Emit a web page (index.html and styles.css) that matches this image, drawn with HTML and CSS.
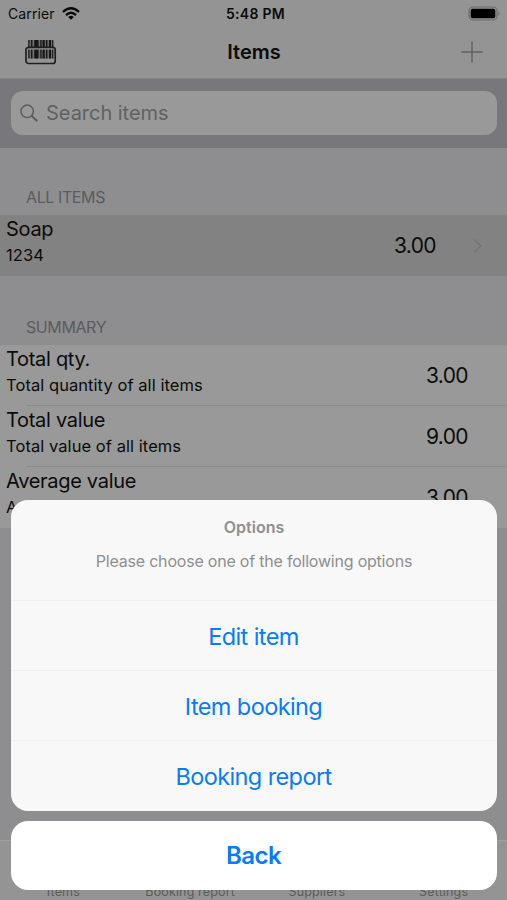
FILE: index.html
```html
<!DOCTYPE html>
<html lang="en">
<head>
<meta charset="utf-8">
<title>Items</title>
<link rel="stylesheet" href="styles.css">
</head>
<body>
<div class="screen">
  <header class="top">
    <div class="status">
      <div class="carrier"><span>Carrier</span>
        <svg class="wifi" width="18" height="13" viewBox="0 0 18 13"><g fill="none" stroke="#080808" stroke-width="2.3"><path d="M1 5Q9-2.5 17 5"/><path d="M4 8.1Q9 3.3 14 8.1"/></g><path d="M6.2 10Q9 7.6 11.8 10L9 12.8Z" fill="#080808"/></svg>
      </div>
      <div class="time">5:48 PM</div>
      <svg class="battery" width="33" height="15" viewBox="0 0 33 15"><rect x="1" y="1" width="28" height="13" rx="4" fill="none" stroke="#6c6c6c" stroke-width="1.2"/><rect x="2.7" y="2.7" width="24.6" height="9.6" rx="2" fill="#000"/><path d="M30.5 5Q32.7 7.5 30.5 10Z" fill="#6c6c6c"/></svg>
    </div>
    <div class="nav">
      <svg class="scan" width="32" height="27" viewBox="0 0 32 27"><path fill="#6c6c6c" d="M3 1h25.5v18.5H3z"/><path fill="#161616" d="M3.3 1h1.2v18.5H3.3zM6 1h1.4v18.5H6zM9.3 1h4.2v18.5H9.3zM15.3 1h1.3v18.5h-1.3zM17.6 1h2.2v18.5h-2.2zM21 1h1.4v18.5H21zM24 1h2v18.5h-2zM27.2 1h1.1v18.5h-1.1z"/><path fill="#929292" d="M2 10.6h28V9H2z"/><rect x="1" y="8.3" width="29.2" height="16.2" rx="2.5" fill="none" stroke="#202020" stroke-width="1.7"/></svg>
      <h1>Items</h1>
      <svg class="plus" width="22" height="22" viewBox="0 0 22 22"><path d="M11 .5v21M.5 11h21" stroke="#606060" stroke-width="1.5"/></svg>
    </div>
  </header>
  <div class="searchbar">
    <div class="field">
      <svg width="19" height="19" viewBox="0 0 19 19"><g fill="none" stroke="#5d5d60" stroke-width="1.5"><circle cx="7.2" cy="7.3" r="6.2"/><path d="M11.6 11.8l5.7 5.5" stroke-width="2"/></g></svg>
      <span>Search items</span>
    </div>
  </div>
  <main>
    <h2 class="first">ALL ITEMS</h2>
    <div class="row selected">
      <div class="labels"><div class="name">Soap</div><div class="sub">1234</div></div>
      <div class="value">3.00</div>
      <svg class="chev" width="10" height="16" viewBox="0 0 10 16"><path d="M1 1.5L8 8L1 14.5" fill="none" stroke="#747476" stroke-width="1.4"/></svg>
    </div>
    <h2 class="second">SUMMARY</h2>
    <div class="row"><div class="labels"><div class="name">Total qty.</div><div class="sub">Total quantity of all items</div></div><div class="value">3.00</div></div>
    <div class="row ruled"><div class="labels"><div class="name">Total value</div><div class="sub">Total value of all items</div></div><div class="value">9.00</div></div>
    <div class="row ruled"><div class="labels"><div class="name">Average value</div><div class="sub">Average value of all items</div></div><div class="value">3.00</div></div>
  </main>
  <footer class="tabs"><span>Items</span><span>Booking report</span><span>Suppliers</span><span>Settings</span></footer>
</div>
<div class="overlay">
  <section class="sheet">
    <div class="intro"><div class="title">Options</div><div class="message">Please choose one of the following options</div></div>
    <div class="action">Edit item</div>
    <div class="action">Item booking</div>
    <div class="action">Booking report</div>
  </section>
  <div class="back">Back</div>
</div>
</body>
</html>
```
FILE: styles.css
```css
* { box-sizing: border-box; }
body { margin: 0; font-family: Inter, "Liberation Sans", sans-serif; color: #0b0b0b; }
h1, h2 { margin: 0; }
.screen { height: 900px; overflow: hidden; display: flex; flex-direction: column; background: #8e8e91; }
.top { height: 79px; flex: none; background: #949494; border-bottom: 1px solid #858587; }
.status { height: 28px; padding: 0 6px 0 8px; display: grid; grid-template-columns: 1fr auto 1fr; align-items: center; font-size: 14px; line-height: 28px; }
.carrier { display: flex; align-items: center; gap: 7px; letter-spacing: .1px; }
.wifi { margin-top: -2px; }
.time { font-weight: 600; letter-spacing: .3px; padding-left: 2px; }
.battery { justify-self: end; margin-top: -1px; }
.nav { height: 50px; padding: 0 24px 0 25px; display: grid; grid-template-columns: 1fr auto 1fr; align-items: center; }
.nav h1 { font-size: 20px; line-height: 48px; font-weight: 600; margin-top: -2px; }
.scan { margin-top: -2px; }
.plus { justify-self: end; margin-top: -2px; }
.searchbar { height: 69px; flex: none; padding: 12px 10px 13px 11px; background: #78787c; }
.field { height: 44px; border-radius: 12px; background: #999; display: flex; align-items: center; gap: 7px; padding-left: 9px; color: #616164; font-size: 20px; letter-spacing: -.03px; }
main { flex: 1; }
h2 { font-weight: 400; font-size: 16px; line-height: 20px; letter-spacing: -.4px; color: #5b5b5e; padding-left: 26px; }
.first { height: 67px; padding-top: 39px; }
.second { height: 69px; padding-top: 41px; }
.row { height: 61px; display: flex; background: #999; padding: 1px 39px 0 6px; position: relative; }
.selected { background: #828282; padding-right: 24px; }
.labels { flex: 1; }
.name { font-size: 20px; line-height: 26px; letter-spacing: -.3px; }
.sub { font-size: 16.5px; line-height: 26px; letter-spacing: .06px; }
.value { font-size: 21px; line-height: 60px; letter-spacing: -.6px; }
.chev { align-self: center; margin-left: 37px; }
.ruled::before { content: ""; position: absolute; top: -1px; left: 26px; right: 0; height: 1px; background: #8b8b8c; }
.tabs { height: 60px; flex: none; background: #949494; border-top: 1px solid #a0a0a2; display: grid; grid-template-columns: repeat(4, 1fr); text-align: center; padding-top: 43px; font-size: 12.5px; line-height: 16px; letter-spacing: .15px; color: #5c5c5c; }
.overlay { position: absolute; left: 11px; top: 500px; width: 486px; display: flex; flex-direction: column; gap: 10px; text-align: center; color: #087cf7; }
.sheet { height: 311px; border-radius: 17px; background: #f8f8f8; }
.intro { height: 100px; padding-top: 17px; color: #8f8f8f; font-size: 16px; line-height: 20px; }
.title { font-weight: 600; }
.message { margin-top: 14px; letter-spacing: -.21px; }
.action { height: 70px; border-top: 1px solid #efefef; font-size: 23.5px; line-height: 71px; letter-spacing: -.6px; padding-right: 1px; }
.back { height: 69px; border-radius: 17px; background: #fff; font-size: 24px; line-height: 70px; font-weight: 600; letter-spacing: -.5px; padding-right: 1px; }
```
